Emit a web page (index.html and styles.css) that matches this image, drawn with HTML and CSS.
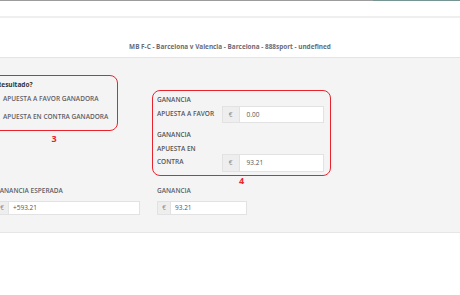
FILE: index.html
```html
<!DOCTYPE html>
<html lang="es">
<head>
    <meta charset="UTF-8">
    <meta name="viewport" content="width=device-width, initial-scale=1.0">
    <title>Calculadora</title>
    <link rel="stylesheet" href="styles.css">
</head>
<body>
    <div class="topbar"><span class="topbarAccent"></span></div>
    <div class="subbar"></div>
    <div class="pageHead">
        <div class="title">MB F-C - Barcelona v Valencia - Barcelona - 888sport - undefined</div>
    </div>
    <div class="content">
        <div class="row">
            <div class="col colLeft">
                <div class="mark markLeft">
                    <div class="fieldTitle">Resultado?</div>
                    <label class="option">APUESTA A FAVOR GANADORA</label>
                    <label class="option">APUESTA EN CONTRA GANADORA</label>
                </div>
                <div class="markNum numLeft">3</div>
            </div>
            <div class="col colRight">
                <div class="mark markRight">
                    <div class="formRow">
                        <div class="formLabel">GANANCIA<br>APUESTA A FAVOR</div>
                        <div class="inputGroup big">
                            <span class="addon">€</span><span class="input">0.00</span>
                        </div>
                    </div>
                    <div class="formRow">
                        <div class="formLabel">GANANCIA<br>APUESTA EN<br>CONTRA</div>
                        <div class="inputGroup big">
                            <span class="addon">€</span><span class="input">93.21</span>
                        </div>
                    </div>
                </div>
                <div class="markNum">4</div>
            </div>
        </div>
        <div class="row rowBottom">
            <div class="col colLeft">
                <div class="small">
                    <div class="smallLabel">GANANCIA ESPERADA</div>
                    <div class="inputGroup wide">
                        <span class="addon">€</span><span class="input">+593.21</span>
                    </div>
                </div>
            </div>
            <div class="col colRight">
                <div class="small">
                    <div class="smallLabel">GANANCIA</div>
                    <div class="inputGroup narrow">
                        <span class="addon">€</span><span class="input">93.21</span>
                    </div>
                </div>
            </div>
        </div>
    </div>
    <div class="footer"></div>
</body>
</html>
```

FILE: styles.css
```css
*{
    box-sizing: border-box;
}
html, body {
    margin: 0;
    padding: 0;
}
body {
    width: 460px;
    height: 295px;
    overflow: hidden;
    background: #fff;
    font-family: "Open Sans", Arial, sans-serif;
    font-size: 6.5px;
    color: #555;
}
.topbar {
    height: 1px;
    background: #9c9c9c;
    display: flex;
    justify-content: flex-end;
}
.topbarAccent {
    width: 87px;
    background: #779494;
}
.subbar {
    height: 17px;
    background: #fff;
    border-bottom: 2px solid #efefef;
}
.pageHead {
    height: 40px;
    padding-top: 24px;
    background: #fff;
    border-bottom: 1px solid #e4e4e4;
    text-align: center;
}
.title {
    line-height: 10px;
    font-weight: 700;
    font-size: 6.4px;
    color: #6b6b75;
}
.content {
    background: #f4f4f4;
    padding-bottom: 17px;
    border-bottom: 1px solid #e6e6e6;
}
.row {
    display: flex;
    align-items: flex-start;
    margin-left: -10px;
}
.colLeft {
    width: 162px;
}
.colRight {
    width: 200px;
}
.mark {
    border: 1.5px solid #e8232e;
    border-radius: 8px;
}
.markLeft {
    width: 128px;
    margin-top: 17px;
    padding: 3px 0 4px 6px;
}
.fieldTitle {
    line-height: 11px;
    font-weight: 700;
    color: #333;
}
.option {
    display: block;
    padding-left: 6px;
    line-height: 18px;
    font-weight: 600;
    color: #5e5e68;
}
.markRight {
    width: 179px;
    margin-top: 32px;
    padding: 2px 6px 3px 4px;
}
.formRow {
    display: flex;
    align-items: flex-end;
    margin-bottom: 5px;
}
.formRow:last-child {
    margin-bottom: 0;
}
.formLabel {
    width: 65px;
    line-height: 13.5px;
    padding-bottom: 3px;
    font-weight: 600;
    color: #555;
}
.markNum {
    text-align: center;
    color: #e8232e;
    font-weight: 700;
    font-size: 9px;
    line-height: 10px;
}
.colRight .markNum {
    width: 179px;
}
.numLeft {
    width: 128px;
    margin-top: 3px;
}
.inputGroup {
    display: flex;
    border: 1px solid #e2e2e2;
    background: #fff;
}
.addon {
    background: #eeeeee;
    border-right: 1px solid #e2e2e2;
    color: #888;
    text-align: center;
}
.input {
    flex: 1;
    color: #555;
}
.big {
    width: 103px;
    height: 17.5px;
    line-height: 15.5px;
}
.big .addon {
    width: 17px;
}
.big .input {
    padding-left: 7px;
}
.small {
    padding-left: 5px;
}
.smallLabel {
    line-height: 10px;
    margin-bottom: 5px;
    font-weight: 600;
    color: #5f5f68;
}
.wide, .narrow {
    height: 14px;
    line-height: 12px;
}
.wide {
    width: 145px;
}
.narrow {
    width: 90px;
}
.wide .addon, .narrow .addon {
    width: 13px;
}
.wide .input, .narrow .input {
    padding-left: 4px;
}
.footer {
    height: 62px;
    background: #fff;
}
```
